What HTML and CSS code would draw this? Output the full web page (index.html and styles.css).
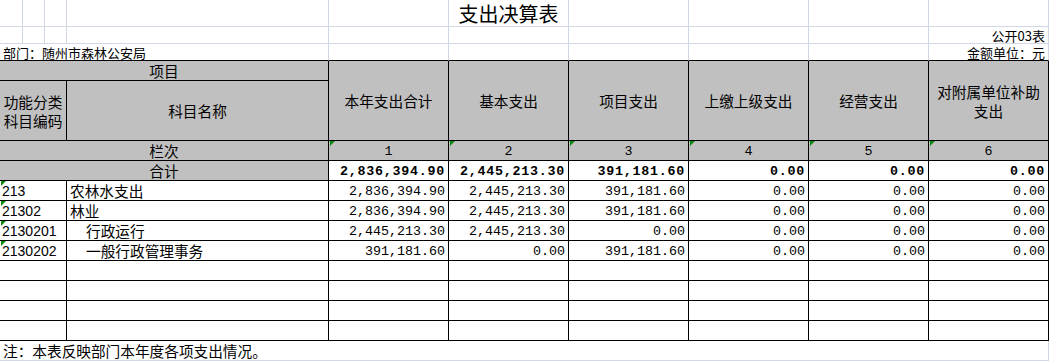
FILE: index.html
```html
<!DOCTYPE html>
<html lang="zh-CN">
<head>
<meta charset="utf-8">
<title>支出决算表</title>
<link rel="stylesheet" href="styles.css">
</head>
<body>
<div class="sheet">
  <!-- row 1 -->
  <div class="c g"></div><div class="c g"></div><div class="c g"></div><div class="c g"></div><div class="c g"></div>
  <div class="c g title">支出决算表</div>
  <div class="c g"></div><div class="c g"></div><div class="c g"></div><div class="c g"></div>
  <!-- row 2 -->
  <div class="c g"></div><div class="c g"></div><div class="c g"></div><div class="c g"></div><div class="c g"></div>
  <div class="c g"></div><div class="c g"></div><div class="c g"></div><div class="c g"></div>
  <div class="c g small right">公开03表</div>
  <!-- row 3 -->
  <div class="c g gb s4 small left">部门：随州市森林公安局</div>
  <div class="c g gb"></div><div class="c g gb"></div><div class="c g gb"></div><div class="c g gb"></div><div class="c g gb"></div>
  <div class="c g gb small right">金额单位：元</div>
  <!-- header -->
  <div class="c b gray s4 center">项目</div>
  <div class="c b gray r2 center">本年支出合计</div>
  <div class="c b gray r2 center">基本支出</div>
  <div class="c b gray r2 center">项目支出</div>
  <div class="c b gray r2 center">上缴上级支出</div>
  <div class="c b gray r2 center">经营支出</div>
  <div class="c b gray r2 center wrap"><span class="ln">对附属单位补助</span><span class="ln">支出</span></div>
  <div class="c b gray s3 center wrap"><span class="ln">功能分类</span><span class="ln">科目编码</span></div>
  <div class="c b gray center">科目名称</div>
  <!-- 栏次 -->
  <div class="c b gray s4 center">栏次</div>
  <div class="c b gray center num tri">1</div>
  <div class="c b gray center num tri">2</div>
  <div class="c b gray center num tri">3</div>
  <div class="c b gray center num tri">4</div>
  <div class="c b gray center num tri">5</div>
  <div class="c b gray center num tri">6</div>
  <!-- 合计 -->
  <div class="c b gray s4 center">合计</div>
  <div class="c b right num bold">2,836,394.90</div>
  <div class="c b right num bold">2,445,213.30</div>
  <div class="c b right num bold">391,181.60</div>
  <div class="c b right num bold">0.00</div>
  <div class="c b right num bold">0.00</div>
  <div class="c b right num bold">0.00</div>
  <!-- data -->
  <div class="c b s3 left code tri">213</div>
  <div class="c b left name">农林水支出</div>
  <div class="c b right num">2,836,394.90</div>
  <div class="c b right num">2,445,213.30</div>
  <div class="c b right num">391,181.60</div>
  <div class="c b right num">0.00</div>
  <div class="c b right num">0.00</div>
  <div class="c b right num">0.00</div>

  <div class="c b s3 left code tri">21302</div>
  <div class="c b left name">林业</div>
  <div class="c b right num">2,836,394.90</div>
  <div class="c b right num">2,445,213.30</div>
  <div class="c b right num">391,181.60</div>
  <div class="c b right num">0.00</div>
  <div class="c b right num">0.00</div>
  <div class="c b right num">0.00</div>

  <div class="c b s3 left code tri">2130201</div>
  <div class="c b left name indent">行政运行</div>
  <div class="c b right num">2,445,213.30</div>
  <div class="c b right num">2,445,213.30</div>
  <div class="c b right num">0.00</div>
  <div class="c b right num">0.00</div>
  <div class="c b right num">0.00</div>
  <div class="c b right num">0.00</div>

  <div class="c b s3 left code tri">2130202</div>
  <div class="c b left name indent">一般行政管理事务</div>
  <div class="c b right num">391,181.60</div>
  <div class="c b right num">0.00</div>
  <div class="c b right num">391,181.60</div>
  <div class="c b right num">0.00</div>
  <div class="c b right num">0.00</div>
  <div class="c b right num">0.00</div>

  <!-- empty rows -->
  <div class="c b s3"></div><div class="c b"></div><div class="c b"></div><div class="c b"></div><div class="c b"></div><div class="c b"></div><div class="c b"></div><div class="c b"></div>
  <div class="c b s3"></div><div class="c b"></div><div class="c b"></div><div class="c b"></div><div class="c b"></div><div class="c b"></div><div class="c b"></div><div class="c b"></div>
  <div class="c b s3"></div><div class="c b"></div><div class="c b"></div><div class="c b"></div><div class="c b"></div><div class="c b"></div><div class="c b"></div><div class="c b"></div>
  <div class="c b s3"></div><div class="c b"></div><div class="c b"></div><div class="c b"></div><div class="c b"></div><div class="c b"></div><div class="c b"></div><div class="c b"></div>

  <!-- note -->
  <div class="c g s10 left note">注：本表反映部门本年度各项支出情况。</div>
</div>
</body>
</html>
```

FILE: styles.css
```css
html, body {
  margin: 0;
  padding: 0;
  background: #ffffff;
}

body {
  font-family: "Noto Sans CJK SC", "Noto Sans", sans-serif;
  font-size: 14.67px;
  color: #000;
}

.sheet {
  display: grid;
  grid-template-columns: 23px 22px 22px 262px repeat(6, 120px);
  grid-template-rows: 27px 17px 17px 20px 60px repeat(11, 20px);
  width: 1049px;
}

.c {
  box-sizing: border-box;
  border-right: 1px solid #d0d7e5;
  border-bottom: 1px solid #d0d7e5;
  display: flex;
  align-items: center;
  white-space: nowrap;
  overflow: hidden;
  line-height: 18px;
  position: relative;
}

.g {
  border-color: #d0d7e5;
}

.gb {
  border-bottom-color: #000;
}

.b {
  border-color: #000;
}

.gray {
  background: #c0c0c0;
}

.s3 { grid-column: span 3; }
.s4 { grid-column: span 4; }
.s10 { grid-column: span 10; }
.r2 { grid-row: span 2; }

.center {
  justify-content: center;
  text-align: center;
}

.left {
  justify-content: flex-start;
  padding-left: 3px;
}

.right {
  justify-content: flex-end;
  padding-right: 3px;
}

.wrap {
  flex-direction: column;
  align-items: center;
  justify-content: center;
  gap: 0;
}

.ln {
  display: block;
  line-height: 19px;
  height: 19px;
}

.title {
  font-size: 20px;
  justify-content: center;
  align-items: flex-end;
  line-height: 22px;
  padding-bottom: 1px;
  overflow: visible;
}

.small {
  font-size: 13px;
  line-height: 15px;
}

.num {
  font-family: "Liberation Mono", "DejaVu Sans Mono", monospace;
  font-size: 13.33px;
  padding-top: 2px;
}

.num.bold {
  font-weight: bold;
  letter-spacing: 0.75px;
}

.code {
  font-family: "Liberation Sans", Arial, sans-serif;
  font-size: 14px;
  padding-left: 2px;
}

.name {
  padding-left: 3px;
}

.indent {
  padding-left: 19px;
}

.note {
  padding-left: 3px;
}

.tri::before {
  content: "";
  position: absolute;
  left: 1px;
  top: 0;
  width: 0;
  height: 0;
  border-top: 5px solid #0b8a0b;
  border-right: 5px solid transparent;
}
```
